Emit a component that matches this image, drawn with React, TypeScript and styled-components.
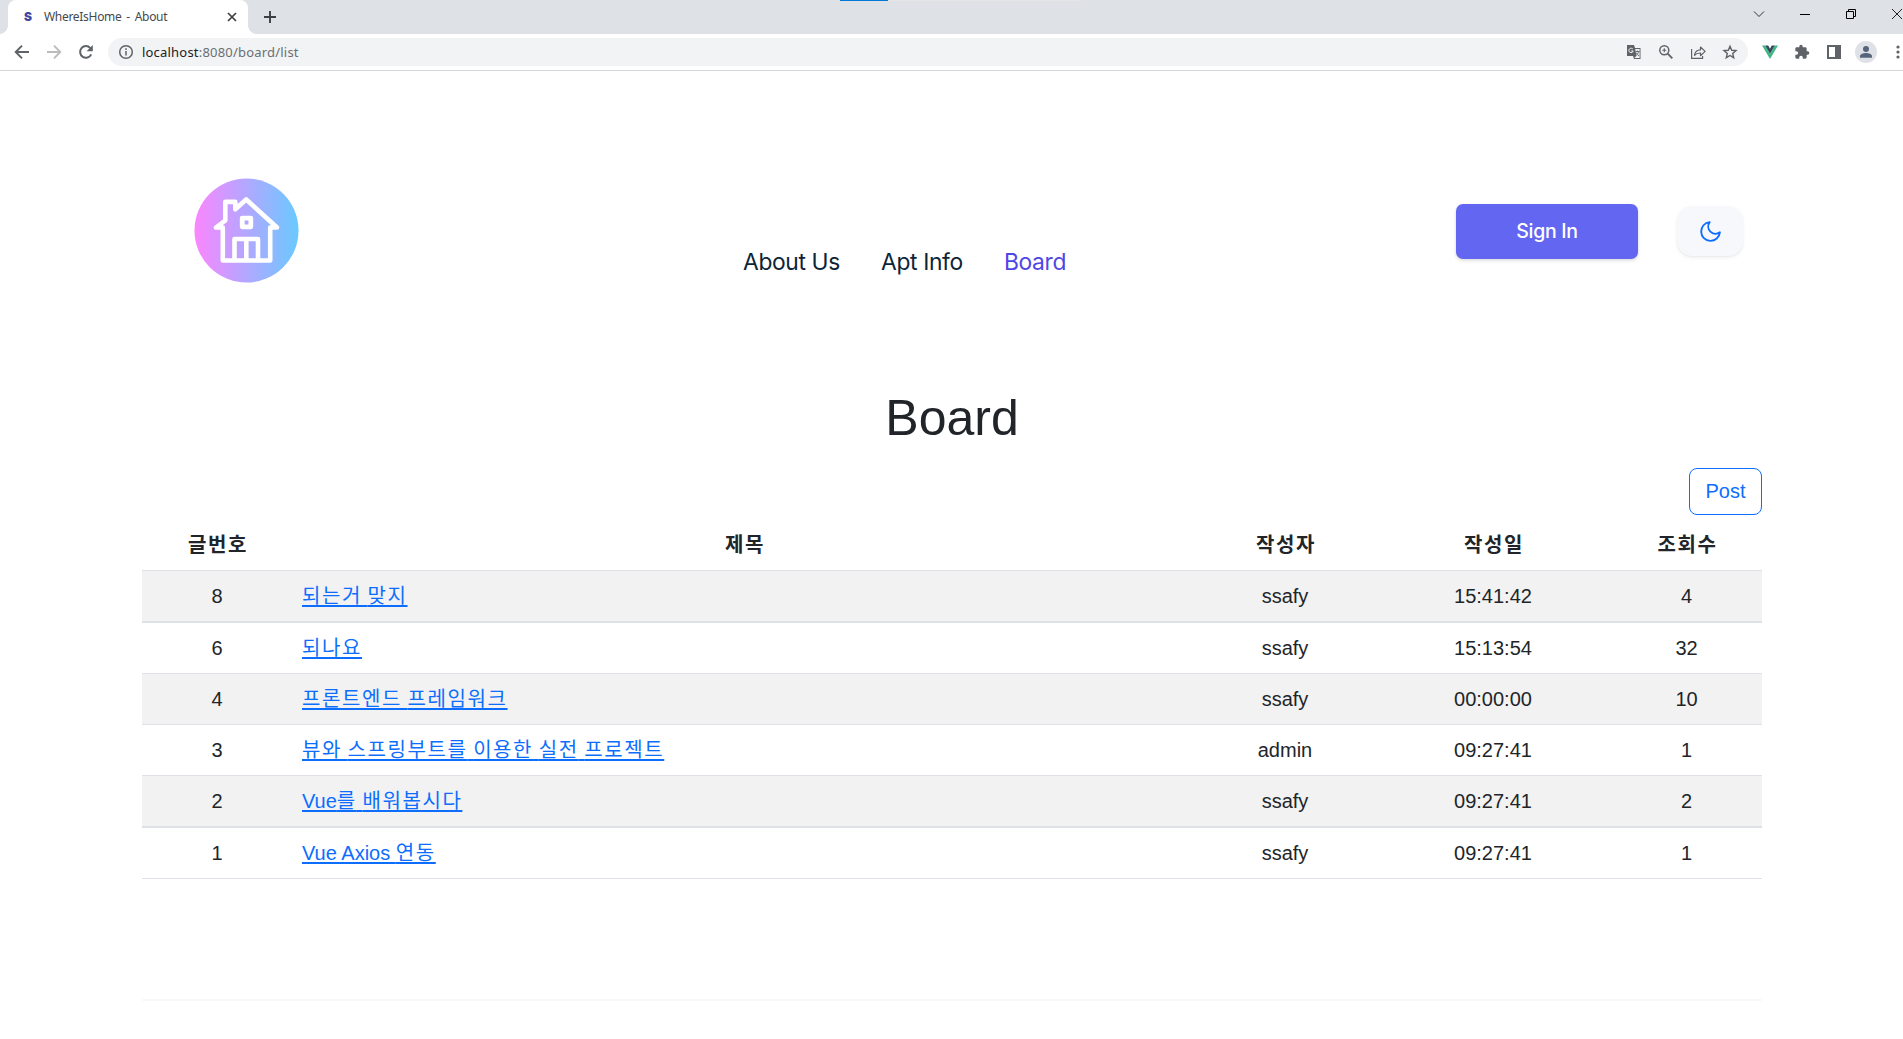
import React from 'react';
import styled, { createGlobalStyle } from 'styled-components';

const GlobalStyle = createGlobalStyle`
  *, *::before, *::after { box-sizing: border-box; }
  html, body { margin: 0; padding: 0; background: #fff; overflow: hidden; }
  body { font-family: "Liberation Sans", "Noto Sans CJK KR", sans-serif; font-size: 20px; color: #212529; }
`;

const Window = styled.div`
  width: 1903px;
  height: 1039px;
  overflow: hidden;
  display: flex;
  flex-direction: column;
`;

/* ---------- browser chrome ---------- */

const TabStrip = styled.div`
  position: relative;
  height: 34px;
  flex: none;
  display: flex;
  background: #dee1e6;
  padding-left: 8px;
`;

const LoadingTrack = styled.div`
  position: absolute;
  top: 0;
  left: 840px;
  width: 241px;
  height: 1px;
  background: linear-gradient(to right, #0078d7 48px, #e5e5e5 48px);
`;

const Tab = styled.div`
  position: relative;
  width: 240px;
  height: 34px;
  display: flex;
  align-items: center;
  padding: 0 11px 6px 12px;
  background: #fff;
  border-radius: 8px 8px 0 0;
  &::before, &::after {
    content: "";
    position: absolute;
    bottom: 0;
    width: 8px;
    height: 8px;
  }
  &::before { left: -8px; background: radial-gradient(circle at 0 0, transparent 7.5px, #fff 8px); }
  &::after { right: -8px; background: radial-gradient(circle at 100% 0, transparent 7.5px, #fff 8px); }
`;

const Favicon = styled.span`
  width: 16px;
  font: 900 12px/16px Inter, sans-serif;
  text-align: center;
  color: #3f46a0;
  margin-top: 6px;
`;

const TabTitle = styled.span`
  flex: 1;
  margin: 5px 0 0 8px;
  font: 12px/16px "Noto Sans", sans-serif;
  letter-spacing: -0.3px;
  word-spacing: 2px;
  color: #45494d;
  white-space: nowrap;
`;

const TabClose = styled.svg`
  margin-top: 6px;
  width: 10px;
  height: 10px;
`;

const NewTab = styled.svg`
  width: 14px;
  height: 14px;
  margin: 10px 0 0 15px;
`;

const WindowControls = styled.div`
  margin-left: auto;
  height: 28px;
  display: flex;
  align-items: center;
  gap: 34px;
  svg { width: 12px; height: 12px; display: block; flex: none; }
`;

const Toolbar = styled.div`
  height: 37px;
  flex: none;
  display: flex;
  align-items: center;
  border-bottom: 1px solid #d5d7da;
  padding-left: 14px;
`;

const NavIcons = styled.div`
  display: flex;
  gap: 16px;
  margin-right: 14px;
  svg { width: 16px; height: 16px; display: block; }
`;

const AddressBar = styled.div`
  width: 1640px;
  flex: none;
  height: 28px;
  border-radius: 14px;
  background: #f1f3f4;
  display: flex;
  align-items: center;
  padding: 0 10px;
  svg { width: 16px; height: 16px; display: block; flex: none; }
`;

const Url = styled.span`
  flex: 1;
  margin-left: 8px;
  font: 13px/18px "Noto Sans", sans-serif;
  letter-spacing: 0.2px;
  color: #6b6f73;
  b { font-weight: 400; color: #202124; }
`;

const AddressActions = styled.div`
  display: flex;
  gap: 16px;
`;

const Extensions = styled.div`
  display: flex;
  flex: none;
  align-items: center;
  gap: 16px;
  margin-left: 14px;
  svg { width: 16px; height: 16px; display: block; flex: none; }
`;

const Avatar = styled.span`
  width: 22px;
  height: 22px;
  margin: 0 -3px;
  border-radius: 50%;
  background: #dee1e6;
  display: flex;
  align-items: center;
  justify-content: center;
`;

/* ---------- page ---------- */

const Header = styled.header`
  height: 214px;
  flex: none;
  margin-top: 71px;
  padding: 36px 160px 0 194px;
  display: flex;
  align-items: flex-start;
`;

const Logo = styled.svg`
  width: 105px;
  height: 105px;
  display: block;
`;

const Nav = styled.nav`
  display: flex;
  margin: 70px 0 0 444px;
`;

const NavLink = styled.a<{ $active?: boolean; $width: number }>`
  width: ${p => p.$width}px;
  font: 400 22.8px/28px Inter, sans-serif;
  letter-spacing: -0.35px;
  color: ${p => (p.$active ? '#4f46e5' : '#0d2438')};
  white-space: nowrap;
`;

const HeaderActions = styled.div`
  margin: 26px 0 0 auto;
  display: flex;
  align-items: flex-start;
  gap: 39px;
`;

const SignIn = styled.button`
  width: 182px;
  height: 55px;
  border: 0;
  border-radius: 7px;
  background: #6366f1;
  color: #fff;
  font: 500 19.5px/28px Inter, sans-serif;
  letter-spacing: -0.3px;
  padding: 0 0 2px;
  box-shadow: 0 1px 3px rgba(0, 0, 0, .1), 0 2px 4px rgba(0, 0, 0, .07);
`;

const ThemeToggle = styled.button`
  width: 66px;
  height: 50px;
  margin-top: 2px;
  border: 0;
  border-radius: 15px;
  background: #f7f8fc;
  padding: 0;
  display: flex;
  align-items: center;
  justify-content: center;
  box-shadow: 0 1px 2px rgba(0, 0, 0, .05), 0 2px 4px rgba(0, 0, 0, .05);
  svg { width: 25px; height: 25px; display: block; }
`;

const Main = styled.main`
  width: 1620px;
  margin-left: 142px;
  display: flex;
  flex-direction: column;
`;

const Title = styled.h1`
  margin: 32px 0 19px;
  height: 61px;
  font-size: 50px;
  line-height: 61px;
  font-weight: 400;
  text-align: center;
`;

const PostButton = styled.button`
  align-self: flex-end;
  width: 73px;
  height: 47px;
  border: 1px solid #0d6efd;
  border-radius: 8px;
  background: #fff;
  color: #0d6efd;
  font: 20px/30px "Liberation Sans", sans-serif;
  padding: 0 0 1px;
`;

const Table = styled.div`
  display: flex;
  flex-direction: column;
`;

const Row = styled.div<{ $striped?: boolean; $border?: number; $head?: boolean }>`
  display: grid;
  grid-template-columns: 150px 904px 178px 238px 149px;
  align-items: center;
  height: ${p => (p.$head ? 56 : 50 + (p.$border ?? 1))}px;
  padding-top: ${p => (p.$head ? 5 : 0)}px;
  padding-left: ${p => (p.$head ? 1 : 0)}px;
  background: ${p => (p.$striped ? '#f2f2f2' : '#fff')};
  border-bottom: ${p => p.$border ?? 1}px solid #dee2e6;
  font-weight: ${p => (p.$head ? 700 : 400)};
  text-align: center;
  line-height: 30px;
`;

const Cell = styled.div<{ $left?: boolean }>`
  text-align: ${p => (p.$left ? 'left' : 'center')};
  padding-left: ${p => (p.$left ? 10 : 0)}px;
`;

const PostLink = styled.a`
  color: #0d6efd;
  text-decoration: underline;
  text-decoration-thickness: 2px;
  text-underline-offset: 2px;
  text-decoration-skip-ink: none;
`;

const Hangul = styled.span`
  letter-spacing: 1.6px;
`;

const Divider = styled.hr`
  width: 100%;
  height: 2px;
  border: 0;
  margin: 120px 0 0;
  background: #f7f7fc;
`;

const posts = [
  { no: 8, title: '되는거 맞지', author: 'ssafy', date: '15:41:42', views: 4, border: 2 },
  { no: 6, title: '되나요', author: 'ssafy', date: '15:13:54', views: 32, border: 1 },
  { no: 4, title: '프론트엔드 프레임워크', author: 'ssafy', date: '00:00:00', views: 10, border: 1 },
  { no: 3, title: '뷰와 스프링부트를 이용한 실전 프로젝트', author: 'admin', date: '09:27:41', views: 1, border: 1 },
  { no: 2, title: 'Vue를 배워봅시다', author: 'ssafy', date: '09:27:41', views: 2, border: 2 },
  { no: 1, title: 'Vue Axios 연동', author: 'ssafy', date: '09:27:41', views: 1, border: 1 },
];

function Spaced({ text }: { text: string }) {
  return (
    <>
      {text.split(/([가-힣]+)/).map((part, i) => (i % 2 ? <Hangul key={i}>{part}</Hangul> : part))}
    </>
  );
}

const GRAY = '#5f6368';

function BrowserChrome() {
  return (
    <>
      <TabStrip>
        <LoadingTrack />
        <Tab>
          <Favicon>S</Favicon>
          <TabTitle>WhereIsHome - About</TabTitle>
          <TabClose viewBox="0 0 10 10" stroke="#3c4043" strokeWidth="1.7"><path d="M1 1l8 8M9 1L1 9" /></TabClose>
        </Tab>
        <NewTab viewBox="0 0 14 14" stroke="#3c4043" strokeWidth="1.9"><path d="M7 1v12M1 7h12" /></NewTab>
        <WindowControls>
          <svg viewBox="0 0 12 12" fill="none" stroke="#333"><path d="M1 3.5l5 5 5-5" /></svg>
          <svg viewBox="0 0 12 12" stroke="#000"><path d="M1 6.5h10" /></svg>
          <svg viewBox="0 0 12 12" fill="none" stroke="#000"><path d="M1.5 3.5h7v7h-7zM3.5 3.5v-2h7v7h-2" /></svg>
          <svg viewBox="0 0 12 12" stroke="#222"><path d="M1 1l10 10M11 1L1 11" /></svg>
        </WindowControls>
      </TabStrip>
      <Toolbar>
        <NavIcons>
          <svg viewBox="0 0 16 16" fill="none" stroke={GRAY} strokeWidth="1.9"><path d="M15 8H2.5M8 1.7L1.7 8 8 14.3" /></svg>
          <svg viewBox="0 0 16 16" fill="none" stroke="#babcbe" strokeWidth="1.9"><path d="M1 8h12.5M8 1.7L14.3 8 8 14.3" /></svg>
          <svg viewBox="0 0 16 16">
            <path d="M13.2 10.3A5.8 5.8 0 1 1 12.3 4.1" fill="none" stroke={GRAY} strokeWidth="2" />
            <path d="M14.8 1v6.2H8.6z" fill={GRAY} />
          </svg>
        </NavIcons>
        <AddressBar>
          <svg viewBox="0 0 16 16" fill="none" stroke={GRAY} strokeWidth="1.5">
            <circle cx="8" cy="8" r="6.3" /><path d="M8 7v4.500M8 4.300v1.600" />
          </svg>
          <Url><b>localhost</b>:8080/board/list</Url>
          <AddressActions>
            <svg viewBox="0 0 16 16">
              <path d="M1 1h7l1 3h5.500v11H8l-1-3H1z" fill={GRAY} />
              <path d="M9.200 5h4.400v9H8.200l2.200-2z" fill="#f1f3f4" />
              <path d="M6.900 5.200A2.200 2.200 0 1 0 7.200 7H5.200" fill="none" stroke="#f1f3f4" />
              <path d="M9.500 7.500h4M11.500 6.500v1M12.700 7.500c-.5 2-1.500 3-2.500 4M10 8.500c.7 1.500 1.800 2.500 3 3.500" fill="none" stroke={GRAY} strokeWidth=".9" />
            </svg>
            <svg viewBox="0 0 16 16" fill="none" stroke={GRAY} strokeWidth="1.500">
              <circle cx="6.300" cy="6.300" r="4.500" /><path d="M9.700 9.700l4.600 4.600" strokeWidth="1.900" /><path d="M4.300 6.300h4M6.300 4.300v4" strokeWidth="1.100" />
            </svg>
            <svg viewBox="0 0 16 16" fill="none" stroke={GRAY} strokeWidth="1.200" strokeLinejoin="round">
              <path d="M1.600 5v9.400h11V12M4.500 11.300c.5-3.600 2.700-5.300 6-5.400V3l4.600 4.400-4.600 4.300V9c-2.600-.1-4.500.6-6 2.300z" />
            </svg>
            <svg viewBox="0 0 16 16" fill="none" stroke={GRAY} strokeWidth="1.400">
              <path d="M8 2.300l1.700 4 4.300.35-3.300 2.850 1 4.200L8 11.450 4.300 13.700l1-4.200L2 6.650l4.300-.35z" />
            </svg>
          </AddressActions>
        </AddressBar>
        <Extensions>
          <svg viewBox="0 0 16 16">
            <path d="M0 1.500h3.200L8 9.700l4.800-8.200H16L8 15z" fill="#41b883" />
            <path d="M3.200 1.500h3L8 4.700l1.800-3.200h3L8 9.700z" fill="#34495e" />
          </svg>
          <svg viewBox="0 0 24 24" fill={GRAY}>
            <path d="M20.500 11H19V7c0-1.100-.9-2-2-2h-4V3.500a2.500 2.500 0 0 0-5 0V5H4c-1.100 0-2 .9-2 2v3.800h1.500a2.700 2.700 0 0 1 0 5.400H2V20c0 1.100.9 2 2 2h3.800v-1.500a2.700 2.700 0 0 1 5.400 0V22H17c1.100 0 2-.9 2-2v-4h1.500a2.500 2.500 0 0 0 0-5z" />
          </svg>
          <svg viewBox="0 0 16 16"><path fill={GRAY} fillRule="evenodd" d="M1 1h14v14H1zM3 3v10h6V3z" /></svg>
          <Avatar>
            <svg viewBox="0 0 16 16" fill="#56647c"><circle cx="8" cy="5" r="3" /><path d="M2 13.700v-1.500c0-2 3.500-3.200 6-3.200s6 1.200 6 3.200v1.500z" /></svg>
          </Avatar>
          <svg viewBox="0 0 16 16" fill={GRAY}><circle cx="8" cy="3" r="1.600" /><circle cx="8" cy="8" r="1.600" /><circle cx="8" cy="13" r="1.600" /></svg>
        </Extensions>
      </Toolbar>
    </>
  );
}

function HouseLogo() {
  return (
    <Logo viewBox="0 0 105 105">
      <defs>
        <linearGradient id="sky" x1="0" x2="1" y1="0" y2="0">
          <stop offset="0" stopColor="#fb86ff" />
          <stop offset="1" stopColor="#69c9ff" />
        </linearGradient>
      </defs>
      <circle cx="52.500" cy="52.500" r="52" fill="url(#sky)" />
      <g fill="none" stroke="#fff" strokeWidth="4.600" strokeLinejoin="round" strokeLinecap="round">
        <path d="M28.800 49.500V82.500H76.200V49.500H83L52.200 21.500 41.300 31.200V23.900H31.300V42.500L22 49.500H28.800" />
        <path d="M40.500 82V61H64V82M52.300 61V82" />
        <path d="M48.200 40.200h8.600v8.600h-8.600z" strokeWidth="4.800" />
      </g>
    </Logo>
  );
}

export default function App() {
  return (
    <Window>
      <GlobalStyle />
      <BrowserChrome />
      <Header>
        <HouseLogo />
        <Nav>
          <NavLink $width={138}>About Us</NavLink>
          <NavLink $width={123}>Apt Info</NavLink>
          <NavLink $width={64} $active>Board</NavLink>
        </Nav>
        <HeaderActions>
          <SignIn>Sign In</SignIn>
          <ThemeToggle>
            <svg viewBox="0 0 24 24" fill="none" stroke="#0d6efd" strokeWidth="1.800" strokeLinecap="round" strokeLinejoin="round">
              <path d="M21 12.790A9 9 0 1 1 11.210 3 7 7 0 0 0 21 12.790z" />
            </svg>
          </ThemeToggle>
        </HeaderActions>
      </Header>
      <Main>
        <Title>Board</Title>
        <PostButton>Post</PostButton>
        <Table>
          <Row $head>
            {['글번호', '제목', '작성자', '작성일', '조회수'].map(h => (
              <Cell key={h}><Spaced text={h} /></Cell>
            ))}
          </Row>
          {posts.map((p, i) => (
            <Row key={p.no} $striped={i % 2 === 0} $border={p.border}>
              <Cell>{p.no}</Cell>
              <Cell $left><PostLink><Spaced text={p.title} /></PostLink></Cell>
              <Cell>{p.author}</Cell>
              <Cell>{p.date}</Cell>
              <Cell>{p.views}</Cell>
            </Row>
          ))}
        </Table>
        <Divider />
      </Main>
    </Window>
  );
}
